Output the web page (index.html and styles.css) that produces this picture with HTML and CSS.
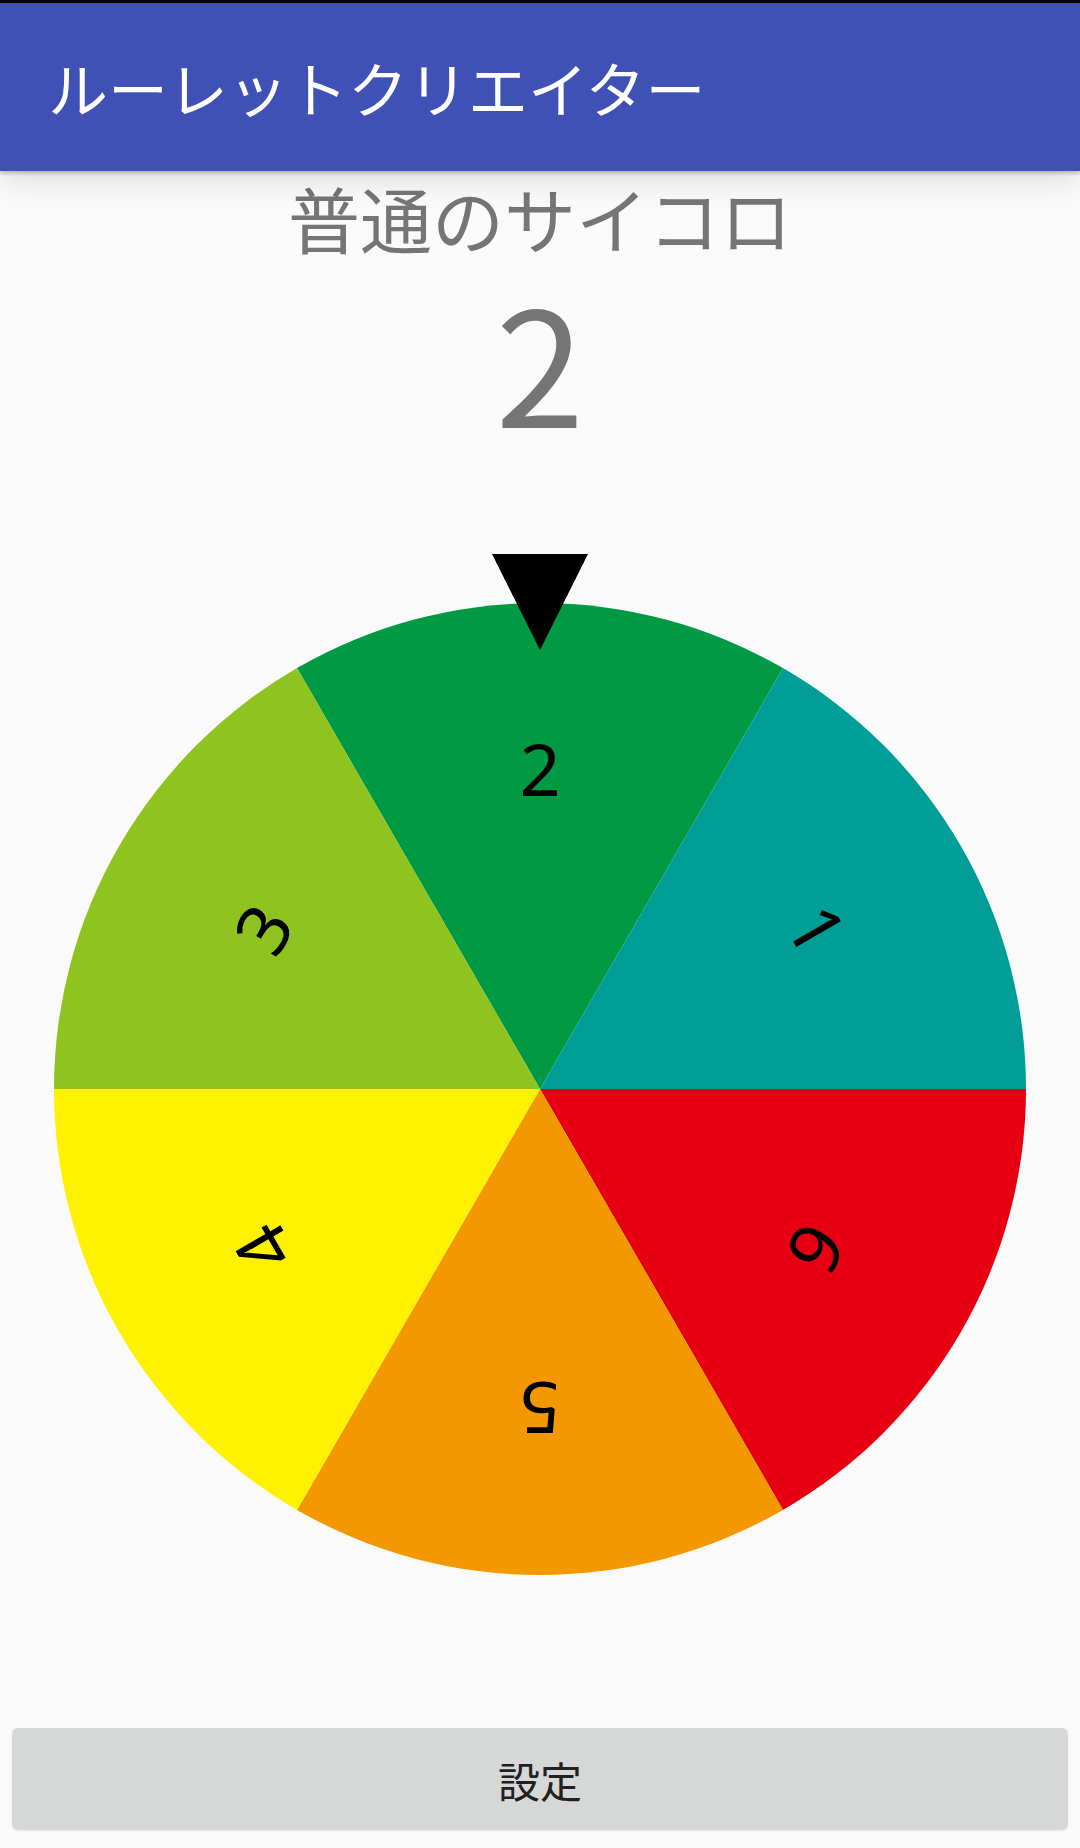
FILE: index.html
```html
<!DOCTYPE html>
<html lang="ja">

<head>
    <meta charset="UTF-8">
    <meta name="viewport" content="width=device-width, initial-scale=1.0">
    <title>ルーレットクリエイター</title>
    <link rel="stylesheet" href="styles.css">
</head>

<body>
    <div class="app-bar">
        <h1 class="app-title">ルーレットクリエイター</h1>
    </div>

    <div class="content">
        <h2 class="roulette-name">普通のサイコロ</h2>
        <div class="result">2</div>

        <svg class="wheel" width="1080" height="1060" viewBox="0 0 1080 1060">
            <path d="M540 549 L297 128.11 A486 486 0 0 1 783 128.11 Z" fill="#009a44" />
            <path d="M540 549 L783 128.11 A486 486 0 0 1 1026 549 Z" fill="#009e96" />
            <path d="M540 549 L1026 549 A486 486 0 0 1 783 969.89 Z" fill="#e60012" />
            <path d="M540 549 L783 969.89 A486 486 0 0 1 297 969.89 Z" fill="#f39800" />
            <path d="M540 549 L297 969.89 A486 486 0 0 1 54 549 Z" fill="#fff100" />
            <path d="M540 549 L54 549 A486 486 0 0 1 297 128.11 Z" fill="#8fc31f" />

            <g class="wheel-labels">
                <text x="540" y="256">2</text>
                <text x="540" y="256" transform="rotate(60 540 549)">1</text>
                <text x="540" y="256" transform="rotate(120 540 549)">6</text>
                <text x="540" y="256" transform="rotate(180 540 549)">5</text>
                <text x="540" y="256" transform="rotate(240 540 549)">4</text>
                <text x="540" y="256" transform="rotate(300 540 549)">3</text>
            </g>

            <polygon points="492,14 588,14 540,110" fill="#000" />
        </svg>
    </div>

    <button class="settings-button">設定</button>
</body>

</html>
```

FILE: styles.css
```css
body {
    margin: 0;
    width: 1080px;
    height: 1848px;
    display: flex;
    flex-direction: column;
    background-color: #fafafa;
    font-family: "Noto Sans CJK JP", "Noto Sans", sans-serif;
    overflow: hidden;
}

.app-bar {
    height: 168px;
    border-top: 3px solid #000;
    background-color: #3f51b5;
    display: flex;
    align-items: center;
    padding-left: 48px;
    box-shadow: 0 2px 4px rgba(0, 0, 0, 0.25), 0 8px 30px rgba(0, 0, 0, 0.12);
    position: relative;
    z-index: 1;
}

.app-title {
    margin: 0;
    color: #fff;
    font-size: 60px;
    font-weight: normal;
    line-height: 1;
}

.content {
    display: flex;
    flex-direction: column;
    align-items: center;
}

.roulette-name {
    margin: 10px 0 0;
    color: #757575;
    font-size: 72px;
    font-weight: normal;
    line-height: 72px;
}

.result {
    margin-top: 25px;
    color: #757575;
    font-size: 160px;
    line-height: 160px;
}

.wheel {
    display: block;
    margin-top: 102px;
}

.wheel-labels text {
    font-family: "Noto Sans", sans-serif;
    font-size: 72px;
    text-anchor: middle;
    fill: #000;
}

.settings-button {
    margin: auto 12px 18px;
    height: 102px;
    border: none;
    border-radius: 6px;
    background-color: #d6d7d7;
    color: #212121;
    font-family: "Noto Sans CJK JP", sans-serif;
    font-size: 42px;
    box-shadow: 0 1px 2px rgba(0, 0, 0, 0.08);
}
```
